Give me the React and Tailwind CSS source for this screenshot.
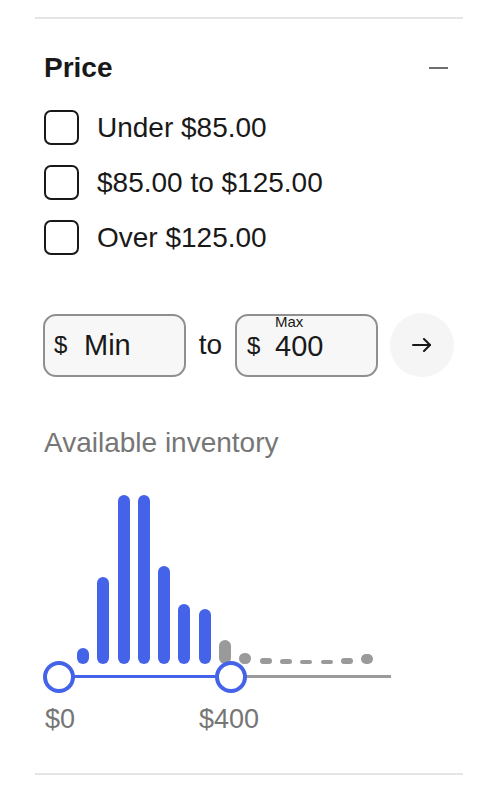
import React from 'react';

const font = { fontFamily: '"Liberation Sans", Arial, sans-serif' };

const bars = [
  { h: 16, on: true },
  { h: 87, on: true },
  { h: 169, on: true },
  { h: 169, on: true },
  { h: 98, on: true },
  { h: 60, on: true },
  { h: 55, on: true },
  { h: 24, on: false },
  { h: 11, on: false },
  { h: 6, on: false },
  { h: 5, on: false },
  { h: 4, on: false },
  { h: 4, on: false },
  { h: 6, on: false },
  { h: 10, on: false },
];

const options = ['Under $85.00', '$85.00 to $125.00', 'Over $125.00'];

const App = () => {
  return (
    <div className="w-[498px] h-[796px] bg-white text-[#191919]" style={font}>
      <div className="pt-[17px] px-[35px]">
        <div className="h-[2px] bg-[#e5e5e5]" />
      </div>

      <div className="pl-[44px] pr-[50px]">
        <div className="mt-[32px] h-[34px] flex items-center justify-between">
          <h2 className="text-[28px] leading-[34px] font-bold">Price</h2>
          <div className="w-[19px] h-[2px] bg-[#6e6e6e]" />
        </div>

        <div className="mt-[25px] flex flex-col gap-[20px]">
          {options.map((label) => (
            <label key={label} className="h-[35px] flex items-center gap-[18px]">
              <span className="w-[35px] h-[35px] rounded-[7px] border-2 border-[#191919] bg-white" />
              <span className="text-[28px] leading-[34px]">{label}</span>
            </label>
          ))}
        </div>

        <div className="mt-[58px] -ml-[1px] flex items-center h-[64px]">
          <div className="shrink-0 w-[143px] h-[63px] rounded-[13px] border-2 border-[#8f8f8f] bg-[#f7f7f7] flex items-center pl-[9px]">
            <span className="text-[24px] leading-none w-[30px]">$</span>
            <span className="text-[29px] leading-none">Min</span>
          </div>
          <span className="shrink-0 w-[49px] text-center text-[28px] leading-none">to</span>
          <div className="relative shrink-0 w-[143px] h-[63px] rounded-[13px] border-2 border-[#8f8f8f] bg-[#f7f7f7] flex items-center pl-[10px]">
            <span className="absolute left-[38px] top-[-2px] text-[15px] leading-[15px]">Max</span>
            <span className="text-[24px] leading-[22px] w-[28px] mt-[1px]">$</span>
            <span className="text-[29px] leading-[22px] mt-[1px]">400</span>
          </div>
          <button className="shrink-0 ml-[12px] w-[64px] h-[64px] rounded-full bg-[#f5f5f5] flex items-center justify-center">
            <svg width="20" height="14" viewBox="0 0 20 14" fill="none" stroke="#191919" strokeWidth="2" strokeLinecap="round" strokeLinejoin="round">
              <path d="M1 7h17" />
              <path d="M12 1l6 6-6 6" />
            </svg>
          </button>
        </div>

        <p className="mt-[49px] text-[28px] leading-[34px] text-[#767676]">Available inventory</p>

        <div className="mt-[35px] w-[348px]">
          <div className="h-[169px] flex items-end gap-[8.3px] pl-[33px]">
            {bars.map((b, i) => (
              <div
                key={i}
                className={b.on ? 'w-[12px] rounded-full bg-[#4463e8]' : 'w-[12px] rounded-full bg-[#9a9a9a]'}
                style={{ height: b.h }}
              />
            ))}
          </div>
          <div className="relative h-[26px]">
            <div className="absolute top-[11px] left-[15px] w-[172px] h-[3px] bg-[#4463e8]" />
            <div className="absolute top-[11px] left-[187px] w-[160px] h-[3px] bg-[#9a9a9a]" />
            <div className="absolute top-[-3px] left-[-1px] w-[32px] h-[32px] rounded-full border-[4px] border-[#4463e8] bg-white" />
            <div className="absolute top-[-3px] left-[171px] w-[32px] h-[32px] rounded-full border-[4px] border-[#4463e8] bg-white" />
          </div>
          <div className="mt-[14px] flex text-[27px] leading-[30px] text-[#767676]">
            <span className="ml-[1px]">$0</span>
            <span className="ml-[124px]">$400</span>
          </div>
        </div>
      </div>

      <div className="mt-[39px] px-[35px]">
        <div className="h-[2px] bg-[#e5e5e5]" />
      </div>
    </div>
  );
};

export default App;
